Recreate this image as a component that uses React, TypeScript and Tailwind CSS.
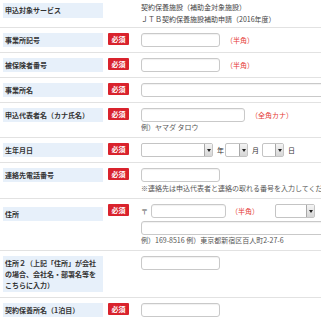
import React from 'react';

const font = { fontFamily: '"Noto Sans CJK JP", "Noto Sans", sans-serif' };

const Badge: React.FC = () => (
  <div className="w-[38px] shrink-0 pl-[5px]">
    <span className="flex h-[12px] w-[21px] items-center justify-center rounded-[1px] bg-[#d9232d] text-[7px] font-bold leading-none text-white">
      必須
    </span>
  </div>
);

const Label: React.FC<{ children: React.ReactNode; className?: string }> = ({ children, className = '' }) => (
  <div className={`ml-[3px] w-[100px] shrink-0 bg-[#e7f0fa] px-[2px] pt-[2px] pb-[1px] text-[7px] font-bold leading-[11px] text-[#333] ${className}`}>
    {children}
  </div>
);

const TextInput: React.FC<{ w: string }> = ({ w }) => (
  <input
    type="text"
    className={`block h-[14px] ${w} shrink-0 rounded-[3px] border border-[#c9c9c9] bg-white shadow-[inset_0_1px_1px_rgba(0,0,0,0.06)] outline-none`}
  />
);

const Select: React.FC<{ w: string }> = ({ w }) => (
  <div className={`flex h-[14px] ${w} shrink-0 items-stretch justify-end rounded-[2px] border border-[#c4c4c4] bg-white`}>
    <div className="flex w-[8px] items-center justify-center border-l border-[#a9a9a9] bg-gradient-to-b from-[#f4f4f4] to-[#d6d6d6]">
      <span className="h-0 w-0 border-x-[2px] border-t-[3px] border-x-transparent border-t-[#222]" />
    </div>
  </div>
);

const Note: React.FC<{ children: React.ReactNode; className?: string }> = ({ children, className = '' }) => (
  <span className={`text-[7px] leading-[10px] text-[#e53935] ${className}`}>{children}</span>
);

const Row: React.FC<{ children: React.ReactNode; className?: string }> = ({ children, className = '' }) => (
  <div className={`flex items-start border-b border-[#e2e2e2] py-[5px] text-[7px] leading-[10px] ${className}`}>{children}</div>
);

export default function App() {
  return (
    <div className="h-[322px] w-[321px] overflow-hidden bg-white text-[#333]" style={font}>
      <div className="flex items-start border-b border-[#e2e2e2] pt-[1px] pb-[2px]">
        <Label className="mt-[2px] h-[15px]">申込対象サービス</Label>
        <div className="w-[38px] shrink-0" />
        <div className="text-[7px] leading-[12px] whitespace-nowrap text-[#444]">
          <div>契約保養施設（補助金対象施設）</div>
          <div>ＪＴＢ契約保養施設補助申請（2016年度）</div>
        </div>
      </div>

      <Row>
        <Label>事業所記号</Label>
        <Badge />
        <div className="flex items-center gap-[6px]">
          <TextInput w="w-[79px]" />
          <Note>（半角）</Note>
        </div>
      </Row>

      <Row>
        <Label>被保険者番号</Label>
        <Badge />
        <div className="flex items-center gap-[6px]">
          <TextInput w="w-[79px]" />
          <Note>（半角）</Note>
        </div>
      </Row>

      <Row>
        <Label>事業所名</Label>
        <Badge />
        <TextInput w="w-[200px]" />
      </Row>

      <Row>
        <Label>申込代表者名（カナ氏名）</Label>
        <Badge />
        <div className="flex flex-col">
          <div className="flex items-center gap-[6px]">
            <TextInput w="w-[104px]" />
            <Note>（全角カナ）</Note>
          </div>
          <span className="text-[7px] leading-[10px] whitespace-nowrap text-[#555]">例）ヤマダ タロウ</span>
        </div>
      </Row>

      <Row>
        <Label>生年月日</Label>
        <Badge />
        <div className="flex items-center text-[7px] leading-[10px] whitespace-nowrap text-[#333]">
          <Select w="w-[72px]" />
          <span className="ml-[4px] mr-[1px]">年</span>
          <Select w="w-[23px]" />
          <span className="ml-[4px] mr-[3px]">月</span>
          <Select w="w-[22px]" />
          <span className="ml-[4px]">日</span>
        </div>
      </Row>

      <Row>
        <Label>連絡先電話番号</Label>
        <Badge />
        <div className="flex min-w-0 flex-col">
          <TextInput w="w-[79px]" />
          <span className="mt-[1px] text-[7px] leading-[10px] whitespace-nowrap text-[#555]">
            ※連絡先は申込代表者と連絡の取れる番号を入力してください。
          </span>
        </div>
      </Row>

      <Row>
        <Label className="mt-[3px]">住所</Label>
        <Badge />
        <div className="flex min-w-0 flex-col">
          <div className="flex items-center whitespace-nowrap">
            <span className="mr-[3px] text-[7px] leading-[10px] text-[#555]">〒</span>
            <TextInput w="w-[75px]" />
            <Note className="ml-[5px]">（半角）</Note>
            <div className="ml-[16px] flex">
              <Select w="w-[40px]" />
            </div>
          </div>
          <div className="mt-[3px] flex">
            <TextInput w="w-[200px]" />
          </div>
          <span className="text-[7px] leading-[10px] whitespace-nowrap text-[#555]">
            例）169-8516 例）東京都新宿区百人町2-27-6
          </span>
        </div>
      </Row>

      <Row>
        <Label>
          住所２（上記「住所」が会社
          <br />
          の場合、会社名・部署名等を
          <br />
          こちらに入力）
        </Label>
        <div className="w-[38px] shrink-0" />
        <TextInput w="w-[79px]" />
      </Row>

      <Row>
        <Label>契約保養所名（1泊目）</Label>
        <Badge />
        <TextInput w="w-[79px]" />
      </Row>
    </div>
  );
}
